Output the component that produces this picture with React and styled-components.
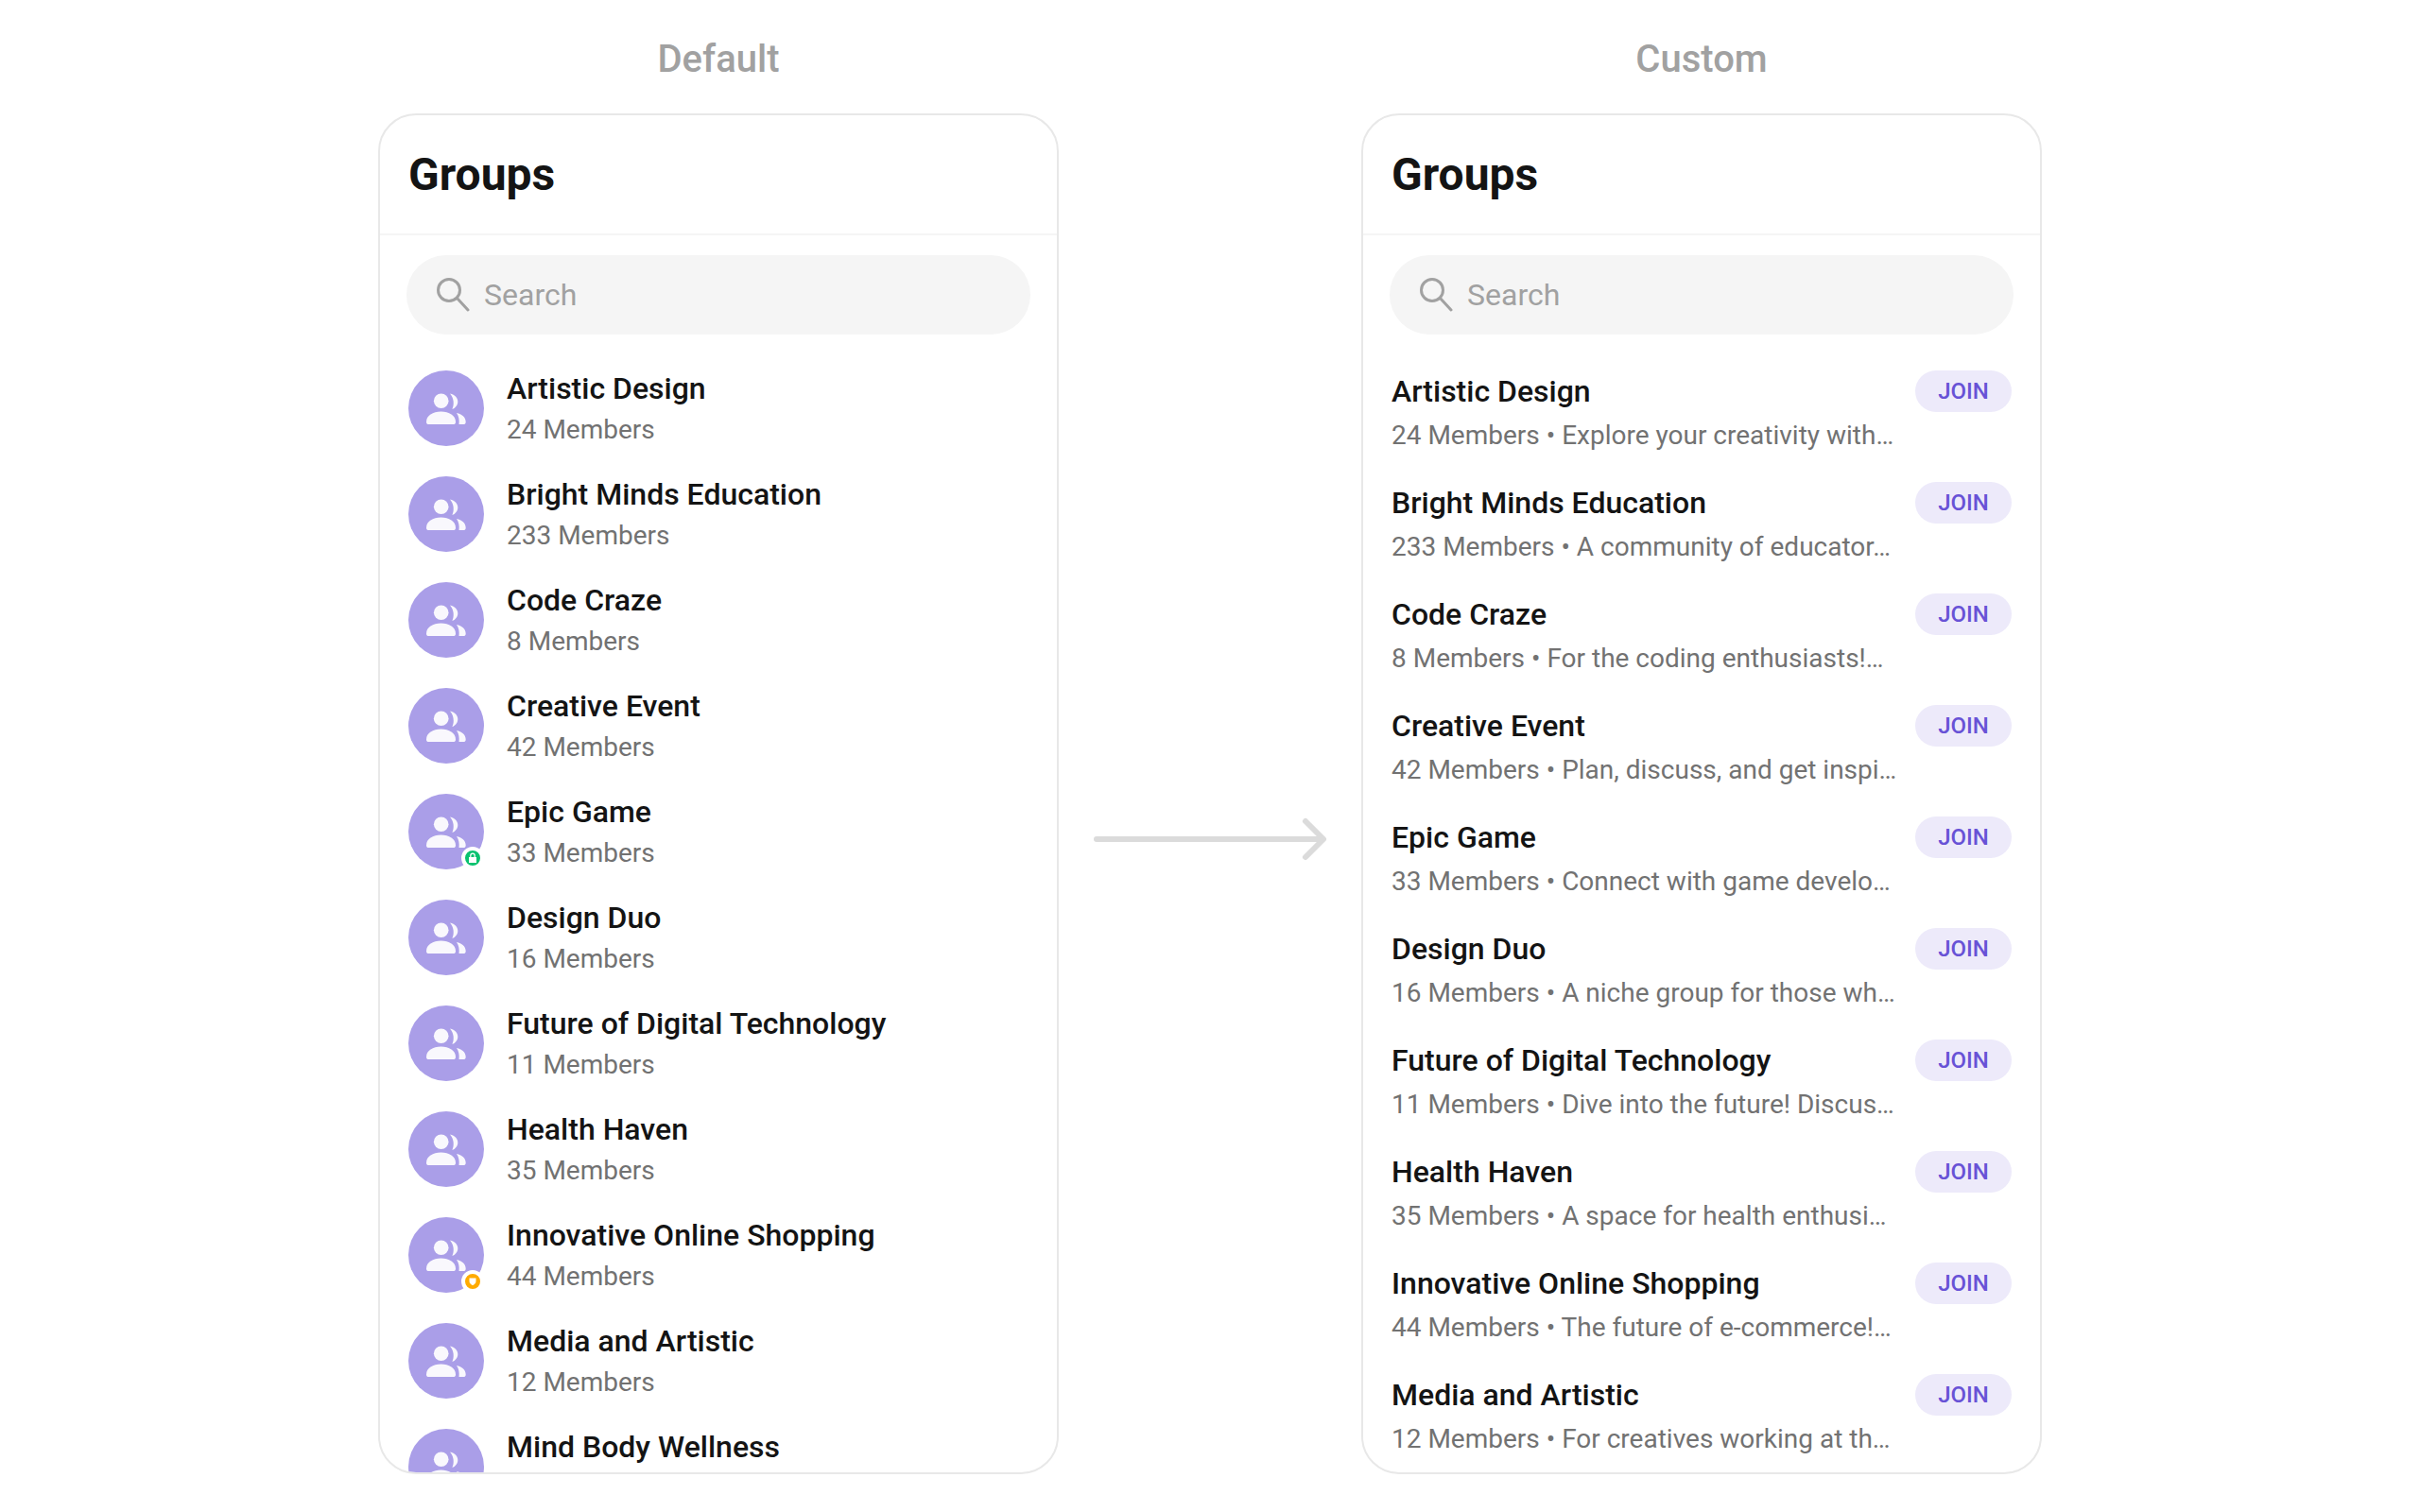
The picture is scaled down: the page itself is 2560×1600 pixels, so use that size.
import React from 'react'
import styled, { createGlobalStyle } from 'styled-components'

const GlobalStyle = createGlobalStyle`
  html, body {
    margin: 0;
    background: #fff;
    font-family: Roboto, "Liberation Sans", sans-serif;
  }
`

const Page = styled.div`
  width: 2560px;
  height: 1600px;
  overflow: hidden;
  display: flex;
  padding-left: 400px;
  box-sizing: border-box;
`

const Column = styled.section`
  width: 720px;
  display: flex;
  flex-direction: column;
  align-items: center;
`

const Label = styled.h2`
  margin: 0;
  height: 120px;
  line-height: 126px;
  font-size: 40px;
  font-weight: 500;
  color: #a1a1a1;
`

const Card = styled.div`
  width: 100%;
  height: 1440px;
  box-sizing: border-box;
  border: 2px solid #e8e8e8;
  border-radius: 40px;
  overflow: hidden;
  background: #fff;
`

const Header = styled.header`
  height: 127px;
  box-sizing: border-box;
  border-bottom: 2px solid #f5f5f5;
  padding: 0 30px;
  display: flex;
  align-items: center;
`

const Title = styled.h1`
  margin: 0;
  font-size: 48px;
  font-weight: 700;
  color: #141414;
`

const SearchWrap = styled.div`
  padding: 21px 28px 22px;
`

const SearchBar = styled.div`
  height: 84px;
  border-radius: 42px;
  background: #f5f5f5;
  display: flex;
  align-items: center;
  gap: 15px;
  padding-left: 31px;
  font-size: 32px;
  color: #a1a1a1;
`

const ArrowSlot = styled.div`
  width: 320px;
  flex: none;
  display: flex;
  justify-content: center;
  align-items: center;
  padding-top: 176px;
  box-sizing: border-box;
  height: 1600px;
`

const Row = styled.div`
  height: 112px;
  box-sizing: border-box;
  padding: 16px 30px;
  display: flex;
  align-items: center;
  gap: 24px;
`

const Avatar = styled.div`
  position: relative;
  width: 80px;
  height: 80px;
  flex: none;
  border-radius: 50%;
  background: #aa9ee8;
`

const Badge = styled.span`
  position: absolute;
  right: 0;
  bottom: 0;
  width: 24px;
  height: 24px;
  box-sizing: border-box;
  border: 4px solid #fff;
  border-radius: 50%;
  background: ${p => p.$color};
  display: flex;
  align-items: center;
  justify-content: center;
`

const RowText = styled.div`
  display: flex;
  flex-direction: column;
  min-width: 0;
`

const Name = styled.div`
  font-size: 32px;
  line-height: 40px;
  font-weight: 500;
  color: #141414;
  white-space: nowrap;
`

const Sub = styled.div`
  margin-top: 6px;
  min-height: 36px;
  font-size: 28px;
  line-height: 36px;
  color: #727272;
  white-space: nowrap;
`

const CustomRow = styled.div`
  height: 118px;
  box-sizing: border-box;
  padding: 0 30px;
  display: flex;
  justify-content: space-between;
  align-items: flex-start;
`

const CustomText = styled.div`
  display: flex;
  flex-direction: column;
  padding-top: 2px;
`

const CustomSub = styled(Sub)`
  margin-top: 9px;
`

const JoinButton = styled.button`
  width: 102px;
  height: 44px;
  padding: 0;
  border: none;
  border-radius: 22px;
  background: #edeafa;
  color: #6852d6;
  font-family: inherit;
  font-size: 24px;
  font-weight: 500;
`

const CustomList = styled.div`
  padding-top: 16px;
`

// the last row is cut off by the card, so its members line never shows
const groups = [
  ['Artistic Design', '24 Members', 'Explore your creativity with…'],
  ['Bright Minds Education', '233 Members', 'A community of educator…'],
  ['Code Craze', '8 Members', 'For the coding enthusiasts!…'],
  ['Creative Event', '42 Members', 'Plan, discuss, and get inspi…'],
  ['Epic Game', '33 Members', 'Connect with game develo…', 'lock'],
  ['Design Duo', '16 Members', 'A niche group for those wh…'],
  ['Future of Digital Technology', '11 Members', 'Dive into the future! Discus…'],
  ['Health Haven', '35 Members', 'A space for health enthusi…'],
  ['Innovative Online Shopping', '44 Members', 'The future of e-commerce!…', 'shield'],
  ['Media and Artistic', '12 Members', 'For creatives working at th…'],
  ['Mind Body Wellness', '', ''],
]

function SearchIcon() {
  return (
    <svg width="36" height="38" viewBox="0 0 36 38" fill="none" stroke="#a1a1a1" strokeWidth="3" strokeLinecap="round">
      <circle cx="14" cy="14" r="11.5" />
      <path d="M22.5 22.5 L34 35" />
    </svg>
  )
}

function GroupIcon() {
  return (
    <svg width="80" height="80" viewBox="0 0 80 80" fill="#f9f8fd">
      <circle cx="34.7" cy="32.3" r="7.8" />
      <path d="M44 24.6 C49.5 25.5 52.3 29.5 52.3 33 C52.3 36.8 49.5 40.2 46.4 41 C48.6 36.5 48.4 29.5 44 24.6 Z" />
      <path d="M19 54.5 C19 47.5 26 43.5 34.5 43.5 C43 43.5 50 47.5 50 54.5 C50 56.4 49 57 47.5 57 L21.5 57 C20 57 19 56.4 19 54.5 Z" />
      <path d="M51 45 C56.5 46 60.7 49.5 60.7 54.5 C60.7 56.4 59.6 57 58.3 57 L53.5 57 C54 52.5 53.5 48.5 51 45 Z" />
    </svg>
  )
}

function LockIcon() {
  return (
    <svg width="12" height="12" viewBox="0 0 12 12" fill="#fff">
      <path d="M2 5 H10 V11 H2 Z" />
      <path d="M3.8 5 V3.4 A2.2 2.2 0 0 1 8.2 3.4 V5" fill="none" stroke="#fff" strokeWidth="1.2" />
    </svg>
  )
}

function ShieldIcon() {
  return (
    <svg width="10" height="10" viewBox="0 0 10 10" fill="#fff">
      <path d="M1.5 1.5 H8.5 V5 C8.5 7 6.5 8.5 5 9.2 C3.5 8.5 1.5 7 1.5 5 Z" />
    </svg>
  )
}

function Arrow() {
  return (
    <svg width="250" height="50" viewBox="0 0 250 50" fill="none" stroke="#dbdbdb" strokeWidth="6" strokeLinecap="round" strokeLinejoin="round">
      <path d="M5 25 H244" />
      <path d="M226 6 L245 25 L226 44" />
    </svg>
  )
}

function GroupsCard({ children }) {
  return (
    <Card>
      <Header>
        <Title>Groups</Title>
      </Header>
      <SearchWrap>
        <SearchBar>
          <SearchIcon />
          <span>Search</span>
        </SearchBar>
      </SearchWrap>
      {children}
    </Card>
  )
}

export default function App() {
  return (
    <Page>
      <GlobalStyle />
      <Column>
        <Label>Default</Label>
        <GroupsCard>
          {groups.map(([name, members, , badge]) => (
            <Row key={name}>
              <Avatar>
                <GroupIcon />
                {badge === 'lock' && <Badge $color="#09c26f"><LockIcon /></Badge>}
                {badge === 'shield' && <Badge $color="#ffab00"><ShieldIcon /></Badge>}
              </Avatar>
              <RowText>
                <Name>{name}</Name>
                <Sub>{members}</Sub>
              </RowText>
            </Row>
          ))}
        </GroupsCard>
      </Column>
      <ArrowSlot>
        <Arrow />
      </ArrowSlot>
      <Column>
        <Label>Custom</Label>
        <GroupsCard>
          <CustomList>
            {groups.slice(0, 10).map(([name, members, desc]) => (
              <CustomRow key={name}>
                <CustomText>
                  <Name>{name}</Name>
                  <CustomSub>{members} • {desc}</CustomSub>
                </CustomText>
                <JoinButton>JOIN</JoinButton>
              </CustomRow>
            ))}
          </CustomList>
        </GroupsCard>
      </Column>
    </Page>
  )
}
